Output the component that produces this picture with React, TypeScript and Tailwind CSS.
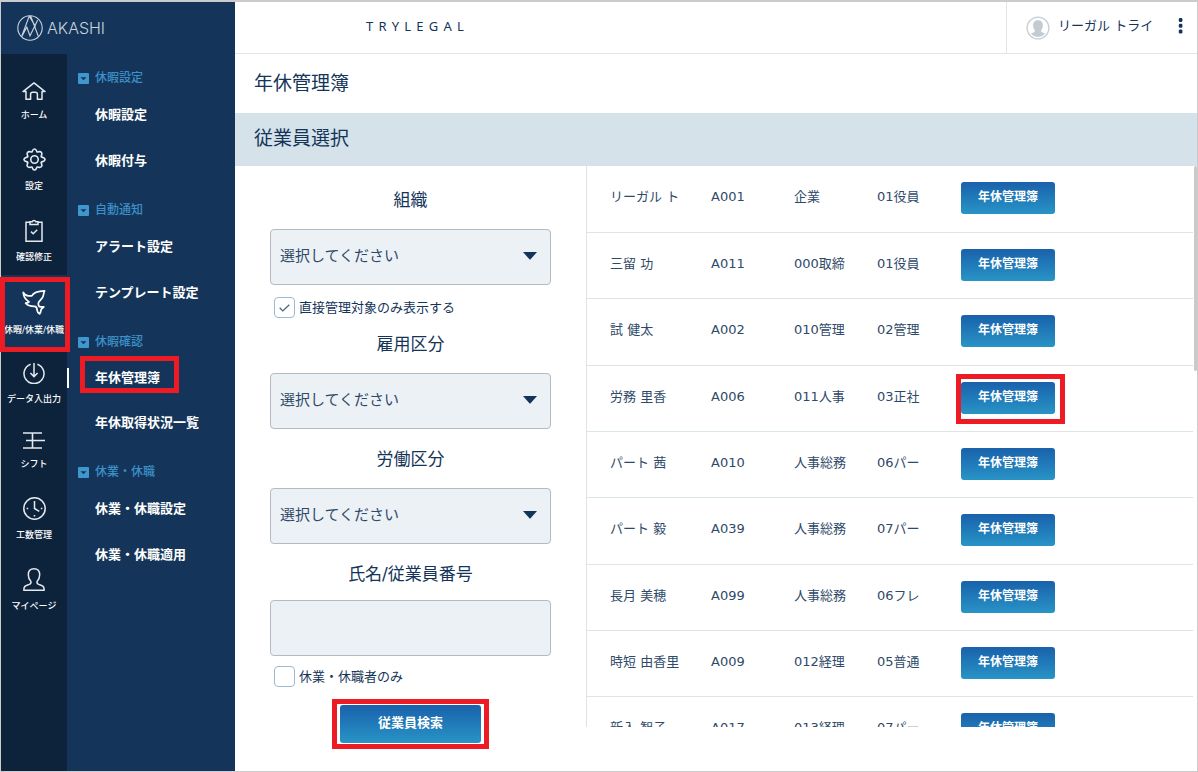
import type { ReactNode } from 'react';

interface RailItem {
  label: string;
  icon: ReactNode;
  active?: boolean;
}

interface MenuGroup {
  title: string;
  items: string[];
}

interface Employee {
  name: string;
  code: string;
  department: string;
  type: string;
}

const railItems: RailItem[] = [
  {
    label: 'ホーム',
    icon: (
      <svg width="24" height="18" viewBox="0 0 24 18" fill="none" stroke="currentColor" strokeWidth="1.5">
        <path d="M1 9.6 12 .9l11 8.7h-3v7.7h-4.6v-5a2 2 0 0 0-2-2h-2.8a2 2 0 0 0-2 2v5H4V9.6Z" strokeLinejoin="round" />
      </svg>
    ),
  },
  {
    label: '設定',
    icon: (
      <svg width="23" height="23" viewBox="0 0 24 24" fill="none" stroke="currentColor" strokeWidth="1.7">
        <circle cx="12" cy="12" r="3.900" />
        <path
          d="M9.400 4C10 3.400 9.800 1 12 1s2 2.400 2.600 3c1.200.9 2.800-1.500 4.700.7 1.500 1.800-.6 3-.3 4.300.4 1 4 .6 4 3s-3.600 2-4 3c-.3 1.300 1.800 2.500.3 4.300-1.900 2.200-3.500-.2-4.700.7-.6.6-.4 3-2.600 3s-2-2.400-2.600-3c-1.200-.9-2.800 1.500-4.700-.7-1.500-1.800.6-3 .3-4.300-.4-1-4-.6-4-3s3.600-2 4-3c.3-1.300-1.800-2.500-.3-4.300C6.600 2.500 8.200 4.900 9.400 4Z"
          strokeLinejoin="round"
        />
      </svg>
    ),
  },
  {
    label: '確認修正',
    icon: (
      <svg width="18" height="23" viewBox="0 0 18 23" fill="none" stroke="currentColor" strokeWidth="1.5">
        <path d="M5 3.2H1v19h16v-19h-4" />
        <path d="M5 5.4V2.8h2.2a1.9 1.9 0 0 1 3.6 0H13v2.6Z" />
        <path d="m6 12.6 2.2 2.2 4-4" />
      </svg>
    ),
  },
  {
    label: '休暇/休業/休職',
    active: true,
    icon: (
      <svg width="24" height="25" viewBox="0 0 24 25" fill="none" stroke="currentColor" strokeWidth="1.700">
        <path
          d="M1.300 2.300C2.800 5 4.500 5.900 6.500 5.900h3.300C11.500 2.500 15 1.200 22.600.900c-1 1.700-.8 3.400-1.600 5.600-1 3-4.700 4.300-4.700 7.200 0 2 .8 3.200 2.400 3.200h3.100c-.6 1.300-2.500 1.500-2.700 2.700-.2 1.600-.4 3-1.500 4.300-1.400-1-2.400-2.300-2.500-3.800-.1-2.300-.7-3.600-2.600-3.700-3.600-.2-6.400-.3-8.800-3.200 1.400-.2 2.600-.5 3.300-1.300C3.800 9.800 1.200 6.500 1.300 2.300Z"
          strokeLinejoin="round"
        />
      </svg>
    ),
  },
  {
    label: 'データ入出力',
    icon: (
      <svg width="22" height="21" viewBox="0 0 22 21" fill="none" stroke="currentColor" strokeWidth="1.5">
        <path d="M7.600 1.200a10 10 0 1 0 6.800 0M11 0v13.400M7.400 10l3.600 3.600 3.600-3.600" />
      </svg>
    ),
  },
  {
    label: 'シフト',
    icon: (
      <svg width="22" height="17" viewBox="0 0 22 17" fill="none" stroke="currentColor" strokeWidth="1.600">
        <path d="M0 1h19M3 8.500h19M0 16h19M9.500 1v15" />
      </svg>
    ),
  },
  {
    label: '工数管理',
    icon: (
      <svg width="23" height="23" viewBox="0 0 23 23" fill="none" stroke="currentColor" strokeWidth="1.5">
        <circle cx="11.500" cy="11.500" r="10.700" />
        <path d="M11.500 4v7.500l4.800 2.800M3.600 11.500h1.600M17.800 11.500h1.600M11.500 18v1.600" />
      </svg>
    ),
  },
  {
    label: 'マイページ',
    icon: (
      <svg width="22" height="23" viewBox="0 0 22 23" fill="none" stroke="currentColor" strokeWidth="1.5">
        <path
          d="M11 .8c3.600 0 5.700 2.500 5.700 6 0 2.600-.9 4.800-2.500 6.400-.5 1.500.2 2.700 1.600 3.200 3.600 1.300 5.400 1.500 5.400 5.800H.8c0-4.300 1.800-4.500 5.400-5.800 1.400-.5 2.100-1.700 1.600-3.200C6.200 11.600 5.300 9.400 5.300 6.800c0-3.500 2.100-6 5.700-6Z"
          strokeLinejoin="round"
        />
      </svg>
    ),
  },
];

const menuGroups: MenuGroup[] = [
  { title: '休暇設定', items: ['休暇設定', '休暇付与'] },
  { title: '自動通知', items: ['アラート設定', 'テンプレート設定'] },
  { title: '休暇確認', items: ['年休管理簿', '年休取得状況一覧'] },
  { title: '休業・休職', items: ['休業・休職設定', '休業・休職適用'] },
];

const employees: Employee[] = [
  { name: 'リーガル ト', code: 'A001', department: '企業', type: '01役員' },
  { name: '三留 功', code: 'A011', department: '000取締', type: '01役員' },
  { name: '試 健太', code: 'A002', department: '010管理', type: '02管理' },
  { name: '労務 里香', code: 'A006', department: '011人事', type: '03正社' },
  { name: 'パート 茜', code: 'A010', department: '人事総務', type: '06パー' },
  { name: 'パート 毅', code: 'A039', department: '人事総務', type: '07パー' },
  { name: '長月 美穂', code: 'A099', department: '人事総務', type: '06フレ' },
  { name: '時短 由香里', code: 'A009', department: '012経理', type: '05普通' },
  { name: '新入 智子', code: 'A017', department: '013経理', type: '07パー' },
];

const activeMenu = '年休管理簿';
const highlightedCode = 'A006';

function Logo() {
  return (
    <div className="flex h-[52px] items-center gap-1 pl-4 text-[#c9d4df]">
      <svg width="26" height="26" viewBox="0 0 26 26" fill="none" stroke="currentColor" strokeWidth="1.100">
        <circle cx="13" cy="13" r="12.2" />
        <path d="M4.600 21.500 12.200 1.200h1.600l7.600 20.300M4.800 21.500l5-9.300 3.200 8.600 7.600-15.600M12.600 1.600l6 10" />
      </svg>
      <span className="font-['Inter'] text-[16px] font-light leading-6">AKASHI</span>
    </div>
  );
}

function Rail() {
  return (
    <nav className="w-[66px] shrink-0 bg-[#0d233c] pt-[13px]">
      {railItems.map((item) => (
        <a
          key={item.label}
          href="#"
          className={`relative flex flex-col items-center pt-[15px] pb-2.5 ${item.active ? 'bg-[#143559] text-white' : 'text-[#e4e9ee]'}`}
        >
          {item.icon}
          <span className="mt-[7px] text-[9px] font-medium leading-4 whitespace-nowrap text-white">{item.label}</span>
          {item.active && (
            <>
              <span className="absolute top-3.5 left-[3px] h-8 w-px bg-white" />
              <span className="absolute top-0.5 -right-[3px] -bottom-1 -left-px z-10 border-[5px] border-[#ed1c24]" />
            </>
          )}
        </a>
      ))}
    </nav>
  );
}

function SideMenu() {
  return (
    <nav className="flex-1 pt-2.5">
      {menuGroups.map((group) => (
        <section key={group.title} className="mb-3">
          <h2 className="flex h-7 items-center gap-1.5 pl-[11px] text-[12px] leading-4 font-medium text-[#3c8fc7]">
            <svg width="11" height="11" viewBox="0 0 11 11">
              <rect width="11" height="11" rx="1" fill="#3f97cd" />
              <path d="M2.500 4.200h6L5.500 7.300Z" fill="#143559" />
            </svg>
            {group.title}
          </h2>
          {group.items.map((item) =>
            item === activeMenu ? (
              <a key={item} href="#" className="relative flex h-11 items-center pl-7 text-[13px] leading-5 font-bold text-white">
                <span className="absolute top-3 left-0 h-5 w-0.5 bg-white" />
                <span className="absolute top-0 left-[13px] h-[37px] w-[99px] border-[5px] border-[#ed1c24]" />
                {item}
              </a>
            ) : (
              <a key={item} href="#" className="flex h-[46px] items-center pl-7 text-[13px] leading-5 font-bold text-white">
                {item}
              </a>
            ),
          )}
        </section>
      ))}
    </nav>
  );
}

function Header() {
  return (
    <header className="flex h-[52px] border-b border-[#dfe5e8]">
      <p className="flex-1 self-center pb-[3px] pl-[131px] font-['Noto_Sans'] text-[13px] leading-5 tracking-[0.4em]">TRYLEGAL</p>
      <div className="flex w-[191px] items-center border-l border-[#dfe5e8] pl-[19px]">
        <svg width="24" height="24" viewBox="0 0 24 24">
          <circle cx="12" cy="12" r="10.900" fill="#fff" stroke="#c7d0d8" strokeWidth="1.300" />
          <path
            d="M12 4.200c3.200 0 4.900 2.200 4.900 5.200 0 2-.7 3.700-1.800 4.900-.2 1.600.6 1.900 3.900 3.200a9 9 0 0 1-14 0c3.300-1.300 4.100-1.600 3.900-3.200-1.100-1.200-1.800-2.900-1.800-4.900 0-3 1.700-5.200 4.900-5.200Z"
            fill="#c3cbd3"
          />
        </svg>
        <span className="ml-2 flex-1 pb-[3px] text-[13px] leading-5 whitespace-nowrap">リーガル トライ</span>
        <button type="button" aria-label="メニュー" className="mr-3.5 pb-[3px]">
          <svg width="5" height="16" viewBox="0 0 5 16" fill="#143559">
            <rect x=".8" y="0" width="3.600" height="4" rx="1.200" />
            <rect x=".8" y="5.700" width="3.600" height="4" rx="1.200" />
            <rect x=".8" y="11.400" width="3.600" height="4" rx="1.200" />
          </svg>
        </button>
      </div>
    </header>
  );
}

function SelectField({ id, label }: { id: string; label: string }) {
  return (
    <div>
      <label htmlFor={id} className="block text-center text-[17px] leading-7">
        {label}
      </label>
      <div className="relative mt-[15px]">
        <select
          id={id}
          className="h-14 w-full appearance-none rounded border border-[#b3bbc1] bg-[#ecf1f6] pb-0.5 pl-[9px] text-[15px] text-[#2f4a68]"
        >
          <option>選択してください</option>
        </select>
        <svg className="pointer-events-none absolute top-[23px] right-3.5" width="14" height="8" viewBox="0 0 14 8">
          <path d="M0 0h14L7.600 7.300a1 1 0 0 1-1.200 0Z" fill="#143559" />
        </svg>
      </div>
    </div>
  );
}

function CheckField({ id, label, checked }: { id: string; label: string; checked?: boolean }) {
  return (
    <div className="relative flex items-center gap-1 pl-1">
      <input
        id={id}
        type="checkbox"
        defaultChecked={checked}
        className="peer size-[21px] appearance-none rounded border border-[#9dbad0] bg-white"
      />
      <svg
        className="pointer-events-none absolute top-[7px] left-[9px] hidden peer-checked:block"
        width="11"
        height="8"
        viewBox="0 0 11 8"
        fill="none"
        stroke="#50647a"
        strokeWidth="1.300"
      >
        <path d="m.7 3.800 3.100 3.100L10.300.7" />
      </svg>
      <label htmlFor={id} className="text-[13px] leading-5">
        {label}
      </label>
    </div>
  );
}

function SearchForm() {
  return (
    <form className="w-[351px] shrink-0 px-[35px] pt-5">
      <SelectField id="organization" label="組織" />
      <div className="my-3">
        <CheckField id="direct" label="直接管理対象のみ表示する" checked />
      </div>
      <SelectField id="employment" label="雇用区分" />
      <div className="h-4" />
      <SelectField id="labor" label="労働区分" />
      <label htmlFor="keyword" className="mt-4 block text-center text-[17px] leading-7">
        氏名/従業員番号
      </label>
      <input id="keyword" type="text" className="mt-3 h-14 w-full rounded border border-[#b3bbc1] bg-[#ecf1f6] px-[9px] text-[15px]" />
      <div className="mt-2.5">
        <CheckField id="absent" label="休業・休職者のみ" />
      </div>
      <div className="relative mx-auto mt-[18px] w-[141px]">
        <button
          type="button"
          className="h-[38px] w-full rounded-[3px] bg-linear-to-b from-[#1a61ab] to-[#2994c6] pb-0.5 text-[13px] font-bold text-white"
        >
          従業員検索
        </button>
        <span className="pointer-events-none absolute -inset-x-2 -inset-y-1.5 border-[5px] border-[#ed1c24]" />
      </div>
    </form>
  );
}

function EmployeeList() {
  return (
    <div className="relative h-[561px] flex-1 overflow-hidden border-l border-[#dbe4e9] pr-1">
      <table className="w-full table-fixed text-left text-[13px] leading-5 text-[#2f4a68]">
        <colgroup>
          <col className="w-[124px]" />
          <col className="w-[83px]" />
          <col className="w-[83px]" />
          <col className="w-[84px]" />
          <col />
        </colgroup>
        <tbody>
          {employees.map((employee) => (
            <tr key={employee.code} className="h-[66px] border-b border-[#dbe4e9] nth-[3n]:h-[67px]">
              <td className="pb-[3px] pl-[23px] whitespace-nowrap">{employee.name}</td>
              <td className="pb-[3px]">{employee.code}</td>
              <td className="pb-[3px] whitespace-nowrap">{employee.department}</td>
              <td className="pb-[3px] whitespace-nowrap">{employee.type}</td>
              <td className="pb-px">
                <div className="relative w-[94px]">
                  <button
                    type="button"
                    className="block h-8 w-full rounded-[3px] bg-linear-to-b from-[#1a61ab] to-[#2994c6] pb-0.5 text-[12px] font-bold text-white"
                  >
                    年休管理簿
                  </button>
                  {employee.code === highlightedCode && (
                    <span className="pointer-events-none absolute -top-2 -right-2.5 -bottom-2.5 -left-[5px] border-[5px] border-[#ed1c24]" />
                  )}
                </div>
              </td>
            </tr>
          ))}
        </tbody>
      </table>
      <div className="absolute top-0 right-0 h-[205px] w-[3px] rounded-full bg-[#cacaca]" />
    </div>
  );
}

export default function App() {
  return (
    <div className="flex min-h-screen border border-t-2 border-[#cccccc] bg-white font-['DejaVu_Sans','Noto_Sans_CJK_JP',sans-serif] text-[#143559]">
      <aside className="flex w-[234px] shrink-0 flex-col bg-[#143559]">
        <Logo />
        <div className="flex flex-1">
          <Rail />
          <SideMenu />
        </div>
      </aside>

      <main className="min-w-0 flex-1">
        <Header />
        <h1 className="px-[19px] pt-[15px] pb-4 text-[19px] leading-7">年休管理簿</h1>
        <h2 className="bg-[#d5e2ea] px-[19px] pt-[11px] pb-3.5 text-[19px] leading-7">従業員選択</h2>
        <div className="flex items-start">
          <SearchForm />
          <EmployeeList />
        </div>
      </main>
    </div>
  );
}
